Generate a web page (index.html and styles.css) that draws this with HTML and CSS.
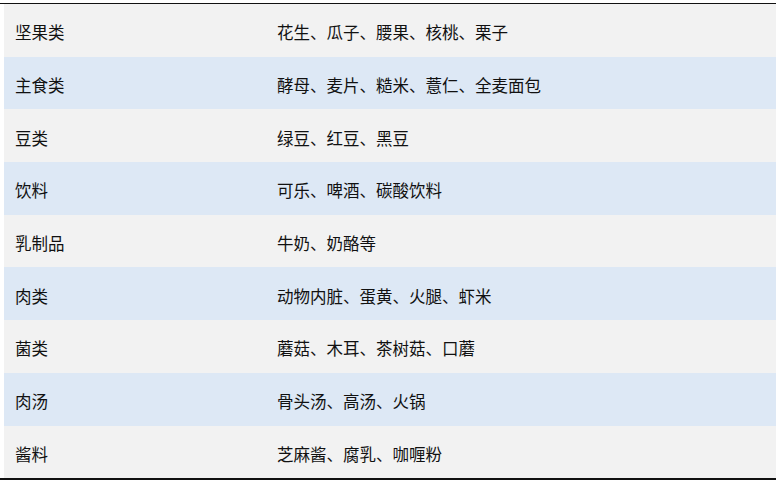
FILE: index.html
```html
<!DOCTYPE html>
<html lang="zh">
<head>
<meta charset="utf-8">
<link rel="stylesheet" href="styles.css">
</head>
<body>
<div class="table">
  <div class="row gray"><div class="c1">坚果类</div><div class="c2">花生、瓜子、腰果、核桃、栗子</div></div>
  <div class="row blue"><div class="c1">主食类</div><div class="c2">酵母、麦片、糙米、薏仁、全麦面包</div></div>
  <div class="row gray"><div class="c1">豆类</div><div class="c2">绿豆、红豆、黑豆</div></div>
  <div class="row blue"><div class="c1">饮料</div><div class="c2">可乐、啤酒、碳酸饮料</div></div>
  <div class="row gray"><div class="c1">乳制品</div><div class="c2">牛奶、奶酪等</div></div>
  <div class="row blue"><div class="c1">肉类</div><div class="c2">动物内脏、蛋黄、火腿、虾米</div></div>
  <div class="row gray"><div class="c1">菌类</div><div class="c2">蘑菇、木耳、茶树菇、口蘑</div></div>
  <div class="row blue"><div class="c1">肉汤</div><div class="c2">骨头汤、高汤、火锅</div></div>
  <div class="row gray"><div class="c1">酱料</div><div class="c2">芝麻酱、腐乳、咖喱粉</div></div>
</div>
</body>
</html>
```
FILE: styles.css
```css
html, body {
  margin: 0;
  padding: 0;
  background: #ffffff;
}
body {
  font-family: "Noto Sans CJK SC", "Noto Sans", sans-serif;
  font-size: 16.5px;
  color: #111;
  padding-top: 3px;
}
.table {
  width: 776px;
  border-top: 1px solid #111;
  border-bottom: 2px solid #111;
}
.row {
  display: grid;
  grid-template-columns: 277px 1fr;
  height: 52.7px;
  align-items: center;
  margin-left: 4px;
}
.gray { background: #f2f2f2; }
.blue { background: #dde8f5; }
.c1 { padding-left: 11px; padding-top: 4px; }
.c2 { padding-top: 4px; margin-left: -4px; }
```
